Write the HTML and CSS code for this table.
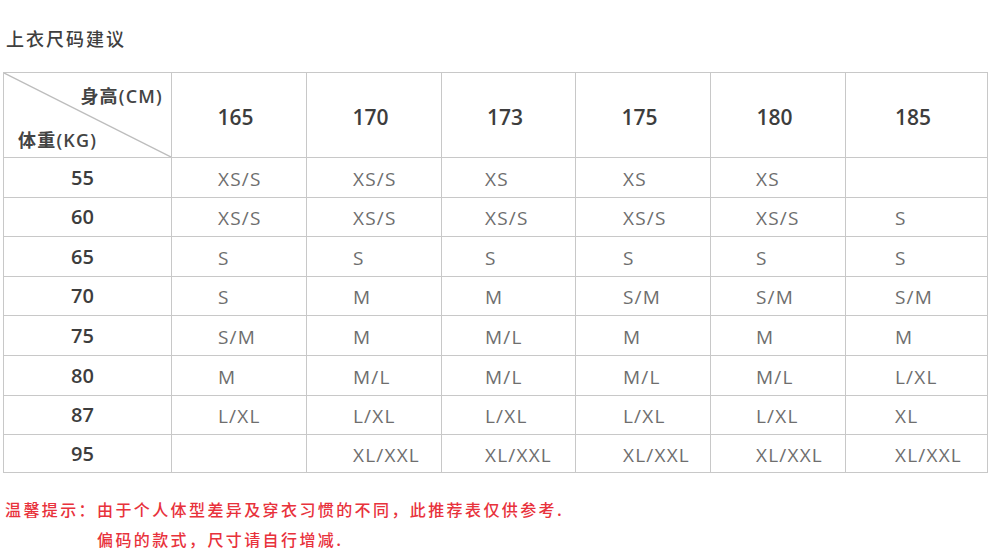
FILE: index.html
```html
<!DOCTYPE html>
<html lang="zh">
<head>
<meta charset="utf-8">
<title>上衣尺码建议</title>
<link rel="stylesheet" href="styles.css">
</head>
<body>
<h1 class="title">上衣尺码建议</h1>
<table class="size-table">
  <colgroup>
    <col class="c-first"><col class="c-mid"><col class="c-mid"><col class="c-mid4"><col class="c-mid"><col class="c-mid"><col class="c-last">
  </colgroup>
  <thead>
    <tr class="head-row">
      <th class="corner">
        <svg class="diag" viewBox="0 0 100 100" preserveAspectRatio="none"><line x1="0" y1="0" x2="100" y2="100" stroke="#bdbdbd" stroke-width="1.4" vector-effect="non-scaling-stroke"/></svg>
        <div class="corner-inner">
          <span class="lbl-top">身高(CM)</span>
          <span class="lbl-bot">体重(KG)</span>
        </div>
      </th>
      <th class="h">165</th><th class="h">170</th><th class="h">173</th><th class="h">175</th><th class="h">180</th><th class="h">185</th>
    </tr>
  </thead>
  <tbody>
    <tr class="r40"><td class="w">55</td><td>XS/S</td><td>XS/S</td><td>XS</td><td>XS</td><td>XS</td><td></td></tr>
    <tr class="r39"><td class="w">60</td><td>XS/S</td><td>XS/S</td><td>XS/S</td><td>XS/S</td><td>XS/S</td><td>S</td></tr>
    <tr class="r40"><td class="w">65</td><td>S</td><td>S</td><td>S</td><td>S</td><td>S</td><td>S</td></tr>
    <tr class="r39"><td class="w">70</td><td>S</td><td>M</td><td>M</td><td>S/M</td><td>S/M</td><td>S/M</td></tr>
    <tr class="r40"><td class="w">75</td><td>S/M</td><td>M</td><td>M/L</td><td>M</td><td>M</td><td>M</td></tr>
    <tr class="r40"><td class="w">80</td><td>M</td><td>M/L</td><td>M/L</td><td>M/L</td><td>M/L</td><td>L/XL</td></tr>
    <tr class="r39"><td class="w">87</td><td>L/XL</td><td>L/XL</td><td>L/XL</td><td>L/XL</td><td>L/XL</td><td>XL</td></tr>
    <tr class="r38"><td class="w">95</td><td></td><td>XL/XXL</td><td>XL/XXL</td><td>XL/XXL</td><td>XL/XXL</td><td>XL/XXL</td></tr>
  </tbody>
</table>
<div class="tip">
  <span class="tip-label">温馨提示：</span>
  <div class="tip-text">
    <div>由于个人体型差异及穿衣习惯的不同，此推荐表仅供参考.</div>
    <div>偏码的款式，尺寸请自行增减.</div>
  </div>
</div>
</body>
</html>
```
FILE: styles.css
```css
html, body {
  margin: 0;
  padding: 0;
  background: #ffffff;
}
body {
  font-family: "Open Sans", "Noto Sans CJK SC", sans-serif;
  color: #444;
}
.title {
  margin: 0;
  padding: 26px 0 0 6px;
  height: 30px;
  font-size: 18px;
  line-height: 24px;
  font-weight: 500;
  letter-spacing: 2px;
  color: #3f3f3f;
  font-family: "Noto Sans CJK SC", sans-serif;
}
.size-table {
  margin: 16px 0 0 3px;
  width: 984px;
  table-layout: fixed;
  border-collapse: collapse;
}
.c-first { width: 168px; }
.c-mid { width: 135px; }
.c-mid4 { width: 134px; }
.c-last { width: 142px; }
.size-table th,
.size-table td {
  border: 1.5px solid #c8c8c8;
  padding: 0;
}
.head-row { height: 84px; }
.r40 { height: 40px; }
.r39 { height: 39px; }
.r38 { height: 38px; }
.corner {
  position: relative;
  padding: 0;
  vertical-align: top;
}
.diag {
  position: absolute;
  left: 0;
  top: 0;
  width: 100%;
  height: 100%;
}
.corner-inner {
  position: relative;
  height: 84px;
  box-sizing: border-box;
  padding: 10px 8px 4px 14px;
  display: flex;
  flex-direction: column;
  justify-content: space-between;
  font-family: "Open Sans", "Noto Sans CJK SC", sans-serif;
  font-size: 18px;
  font-weight: 600;
  letter-spacing: 1.2px;
  line-height: 26px;
  color: #444;
}
.lbl-top { align-self: flex-end; }
.lbl-bot { align-self: flex-start; }
.h {
  font-size: 21px;
  font-weight: 600;
  color: #3d3d3d;
  text-align: center;
  padding: 4px 7px 0 0 !important;
}
.size-table td {
  font-size: 19px;
  color: #6e6e6e;
  letter-spacing: 1.2px;
  text-align: left;
  padding-top: 2px;
  line-height: 24px;
}
.size-table td.w {
  font-size: 20px;
  font-weight: 600;
  color: #3d3d3d;
  text-align: center;
  letter-spacing: 0;
  padding: 0 10px 0 0;
}
.size-table td:nth-child(2) { padding-left: 46px; }
.size-table td:nth-child(3) { padding-left: 46px; }
.size-table td:nth-child(4) { padding-left: 43px; }
.size-table td:nth-child(5) { padding-left: 47px; }
.size-table td:nth-child(6) { padding-left: 45px; }
.size-table td:nth-child(7) { padding-left: 49px; }
.tip {
  display: flex;
  margin-top: 21px;
  padding-left: 5px;
  font-family: "Noto Sans CJK SC", sans-serif;
  font-size: 16px;
  font-weight: 500;
  letter-spacing: 2.4px;
  line-height: 30px;
  color: #e8323c;
}
.tip-label { width: 92px; flex: none; }
```
